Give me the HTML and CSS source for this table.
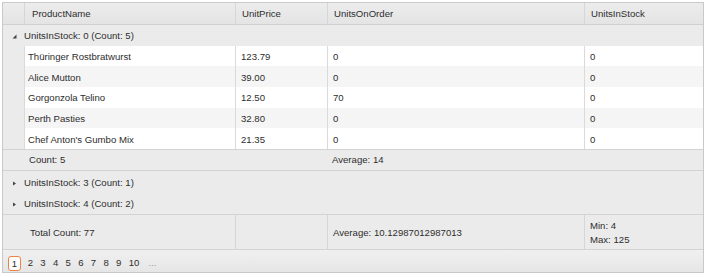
FILE: index.html
```html
<!DOCTYPE html>
<html lang="en">
<head>
    <meta charset="UTF-8">
    <title>Products grouped by UnitsInStock</title>
    <link rel="stylesheet" href="styles.css">
</head>
<body>

<div class="grid">
    <table class="grid-table">
        <thead>
            <tr>
                <th class="indent w-indent"></th>
                <th class="w-name first">ProductName</th>
                <th class="w-price">UnitPrice</th>
                <th class="w-order">UnitsOnOrder</th>
                <th class="w-stock">UnitsInStock</th>
            </tr>
        </thead>
        <tbody>
            <!-- Group: UnitsInStock 0 (expanded) -->
            <tr class="group-row">
                <td colspan="5">
                    <span class="arrow">
                        <svg width="5" height="5" viewBox="0 0 5 5"><polygon points="4.5,0.5 4.5,4.5 0.5,4.5" fill="#444"/></svg>
                    </span>UnitsInStock: 0 (Count: 5)
                </td>
            </tr>
            <tr class="data-row">
                <td class="indent"></td><td class="first">Thüringer Rostbratwurst</td><td>123.79</td><td>0</td><td>0</td>
            </tr>
            <tr class="data-row alt">
                <td class="indent"></td><td class="first">Alice Mutton</td><td>39.00</td><td>0</td><td>0</td>
            </tr>
            <tr class="data-row">
                <td class="indent"></td><td class="first">Gorgonzola Telino</td><td>12.50</td><td>70</td><td>0</td>
            </tr>
            <tr class="data-row alt">
                <td class="indent"></td><td class="first">Perth Pasties</td><td>32.80</td><td>0</td><td>0</td>
            </tr>
            <tr class="data-row">
                <td class="indent"></td><td class="first">Chef Anton's Gumbo Mix</td><td>21.35</td><td>0</td><td>0</td>
            </tr>
            <tr class="group-footer">
                <td></td><td>Count: 5</td><td></td><td>Average: 14</td><td></td>
            </tr>

            <!-- Collapsed groups -->
            <tr class="group-row collapsed">
                <td colspan="5">
                    <span class="arrow">
                        <svg width="5" height="5" viewBox="0 0 5 5"><polygon points="1,0.5 4,2.5 1,4.5" fill="#444"/></svg>
                    </span>UnitsInStock: 3 (Count: 1)
                </td>
            </tr>
            <tr class="group-row collapsed last">
                <td colspan="5">
                    <span class="arrow">
                        <svg width="5" height="5" viewBox="0 0 5 5"><polygon points="1,0.5 4,2.5 1,4.5" fill="#444"/></svg>
                    </span>UnitsInStock: 4 (Count: 2)
                </td>
            </tr>
        </tbody>
        <tfoot>
            <tr class="total-row">
                <td class="indent"></td>
                <td class="first">Total Count: 77</td>
                <td></td>
                <td>Average: 10.12987012987013</td>
                <td>Min: 4<br>Max: 125</td>
            </tr>
        </tfoot>
    </table>

    <div class="pager">
        <span class="page current">1</span>
        <a class="page" href="#">2</a>
        <a class="page" href="#">3</a>
        <a class="page" href="#">4</a>
        <a class="page" href="#">5</a>
        <a class="page" href="#">6</a>
        <a class="page" href="#">7</a>
        <a class="page" href="#">8</a>
        <a class="page" href="#">9</a>
        <a class="page" href="#">10</a>
        <a class="page more" href="#">...</a>
    </div>
</div>

</body>
</html>
```

FILE: styles.css
```css
body {
    margin: 0;
    font-family: "Liberation Sans", Arial, Helvetica, sans-serif;
    font-size: 9.6px;
    color: #2e2e2e;
}

/* Outer grid box */
.grid {
    width: 700px;
    margin: 2px 0 0 2px;
    border: 1px solid #c9c9c9;
    background-color: #ebebeb;
}

.grid-table {
    width: 700px;
    border-collapse: separate;
    border-spacing: 0;
    table-layout: fixed;
}

.grid-table th,
.grid-table td {
    box-sizing: border-box;
    padding: 0 6px;
    text-align: left;
    font-weight: normal;
    white-space: nowrap;
    line-height: 14px;
}

/* Column widths */
.w-indent { width: 21px; }
.w-name   { width: 211px; }
.w-price  { width: 92px; }
.w-order  { width: 257px; }
.w-stock  { width: 119px; }

/* Header */
.grid-table thead th {
    height: 22px;
    background: linear-gradient(#ececec, #e4e4e4);
    border-bottom: 1px solid #d0d0d0;
    border-left: 1px solid #d6d6d6;
}

.grid-table thead th.indent {
    border-left: none;
}

.grid-table thead th.first {
    padding-left: 7px;
}

/* Group header rows */
.group-row td {
    height: 20.7px;
    padding-left: 9px;
    padding-top: 2px;
    background-color: #ebebeb;
}

.group-row.collapsed td {
    height: 21px;
    padding-top: 2px;
}

.group-row.last td {
    height: 23px;
    border-bottom: 1px solid #d3d3d3;
}

.arrow {
    display: inline-block;
    width: 12px;
    vertical-align: 0;
}

.arrow svg {
    display: block;
}

/* Data rows */
.data-row td {
    height: 20.7px;
    background-color: #ffffff;
    border-left: 1px solid #dadada;
    padding-left: 5px;
    padding-top: 2px;
}

.data-row.alt td {
    background-color: #f5f5f5;
}

.data-row td.first {
    padding-left: 3px;
}

.data-row td.indent {
    background-color: #ebebeb;
    border-left: none;
}

/* Group footer */
.group-footer td {
    height: 22px;
    background-color: #ebebeb;
    border-top: 1px solid #d3d3d3;
    border-bottom: 1px solid #d3d3d3;
    padding-left: 5px;
}

/* Grand total footer */
.total-row td {
    height: 35px;
    background-color: #ebebeb;
    border-left: 1px solid #d6d6d6;
    border-bottom: 1px solid #d3d3d3;
    padding-left: 5px;
    padding-top: 1px;
}

.total-row td.indent,
.total-row td.first {
    border-left: none;
}

.total-row td.first {
    padding-left: 6px;
}

/* Pager */
.pager {
    height: 18px;
    display: flex;
    align-items: center;
    padding-left: 4px;
    padding-top: 4px;
    background: linear-gradient(#f0f0f0, #e6e6e6);
}

.page {
    display: inline-block;
    padding: 0 3.65px;
    color: #2e2e2e;
    text-decoration: none;
    line-height: 14px;
}

.page.current {
    box-sizing: border-box;
    width: 13px;
    height: 15px;
    padding: 0;
    margin-left: 1px;
    margin-right: 3px;
    text-align: center;
    border: 1px solid #f08040;
    border-radius: 3px;
    background-color: #ffffff;
}

.page.more {
    margin-left: 2px;
    color: #9a9a9a;
}
```
